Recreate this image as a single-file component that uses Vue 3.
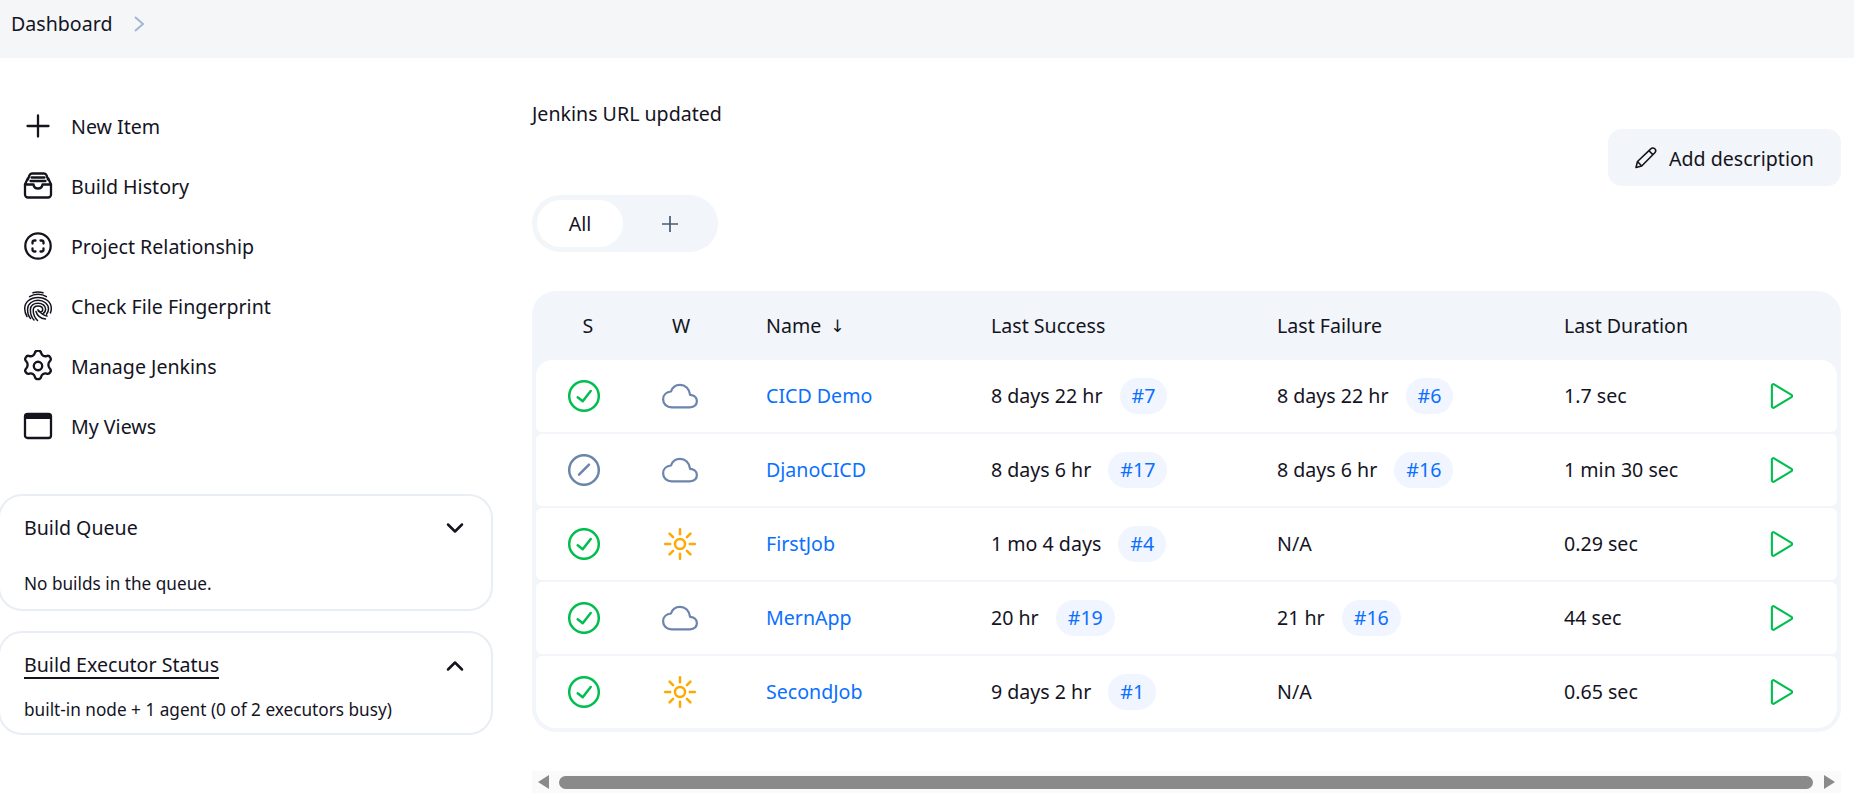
<script setup>
const links = [
  { label: 'New Item', icon: 'plus' },
  { label: 'Build History', icon: 'tray' },
  { label: 'Project Relationship', icon: 'scan' },
  { label: 'Check File Fingerprint', icon: 'finger' },
  { label: 'Manage Jenkins', icon: 'gear' },
  { label: 'My Views', icon: 'window' }
]
const rows = [
  { s: 'ok', w: 'cloud', name: 'CICD Demo', succ: '8 days 22 hr', sb: '#7', fail: '8 days 22 hr', fb: '#6', dur: '1.7 sec' },
  { s: 'off', w: 'cloud', name: 'DjanoCICD', succ: '8 days 6 hr', sb: '#17', fail: '8 days 6 hr', fb: '#16', dur: '1 min 30 sec' },
  { s: 'ok', w: 'sun', name: 'FirstJob', succ: '1 mo 4 days', sb: '#4', fail: 'N/A', fb: '', dur: '0.29 sec' },
  { s: 'ok', w: 'cloud', name: 'MernApp', succ: '20 hr', sb: '#19', fail: '21 hr', fb: '#16', dur: '44 sec' },
  { s: 'ok', w: 'sun', name: 'SecondJob', succ: '9 days 2 hr', sb: '#1', fail: 'N/A', fb: '', dur: '0.65 sec' }
]
const rays = [0, 45, 90, 135, 180, 225, 270, 315]
</script>

<template>
  <div class="page">
    <header class="topbar">
      <span>Dashboard</span>
      <svg class="crumb" viewBox="0 0 12 18" width="12" height="18"><path d="M2 2l8 7-8 7" /></svg>
    </header>
    <div class="body">
      <aside class="side">
        <nav class="links">
          <a v-for="l in links" :key="l.label" class="link">
            <svg class="ico" viewBox="0 0 32 32" width="32" height="32">
              <g v-if="l.icon === 'plus'" class="line"><path d="M16 5.500v21M5.500 16h21" /></g>
              <g v-else-if="l.icon === 'tray'" class="line">
                <path d="M6 9.500 7.400 5.400A3 3 0 0 1 10 3.500h12a3 3 0 0 1 2.600 1.900L26 9.500" />
                <path d="M3 14.500v10a3 3 0 0 0 3 3h20a3 3 0 0 0 3-3v-10l-2.700-6" />
                <path d="M5.700 8.500 3 14.500h8.500c.3 2.500 2 4 4.500 4s4.200-1.500 4.500-4H29" />
                <path d="M9.500 7.500h13M8.500 11h15" />
              </g>
              <g v-else-if="l.icon === 'scan'" class="line">
                <circle cx="16" cy="16" r="12.700" />
                <path d="M10.500 13.500v-1a2 2 0 0 1 2-2h1M18.500 10.500h1a2 2 0 0 1 2 2v1M21.500 18.500v1a2 2 0 0 1-2 2h-1M13.500 21.500h-1a2 2 0 0 1-2-2v-1" />
              </g>
              <g v-else-if="l.icon === 'finger'" class="fine">
                <path d="M11 2.800c3-1.100 7-1.100 10 0" />
                <path d="M7.600 6.600c5-3.300 12-3.300 16.800 0" />
                <path d="M5 26.500c-1.600-2.700-2.300-5.500-2.300-8C2.700 12 8.500 7.400 16 7.400s13.300 4.600 13.300 11c0 1.500-.3 3-.9 4.500" />
                <path d="M8.500 28.500c-1.800-2-3-5.500-2.900-9.500.2-5 4.700-8.700 10.400-8.700s10.500 3.600 10.500 8.700c0 2-.8 3.700-2 5.200" />
                <path d="M12 30c-2.500-2.500-3.700-6.500-3.600-10.500.1-3.800 3.300-6.300 7.600-6.300s7.600 2.400 7.600 5.900c0 2.500-1.300 4-2.800 4.800" />
                <path d="M15.500 30.500c-2.500-2.500-4.300-6-4.300-10 0-2.700 2-4.400 4.800-4.400 2.700 0 4.700 1.400 4.700 3.500 0 1.600-1.100 2.400-2.300 2.400s-2.300-.7-2.400-2.300" />
                <path d="M14 21.500c.9 3.300 3.900 6.800 9.500 7.500" />
                <path d="M17.500 21c1.400 2.500 3.700 4.300 7.500 5" />
              </g>
              <g v-else-if="l.icon === 'gear'" class="cog" transform="translate(16 16) scale(1.170) translate(-16 -16)">
                <circle cx="16" cy="16" r="3.600" />
                <path d="M13.300 4.900c.3-1.400 1.100-2.100 2.700-2.100s2.400.7 2.700 2.100c.4 2 2.700 3.300 4.600 2.600 1.400-.5 2.400-.2 3.200 1.200s.6 2.400-.5 3.300c-1.500 1.400-1.500 4.600 0 6 1.100.9 1.300 1.900.5 3.300s-1.800 1.700-3.200 1.200c-1.900-.7-4.200.6-4.600 2.600-.3 1.400-1.100 2.100-2.700 2.100s-2.400-.7-2.700-2.100c-.4-2-2.700-3.300-4.600-2.600-1.400.5-2.400.2-3.200-1.200s-.6-2.400.5-3.300c1.500-1.400 1.500-4.600 0-6-1.100-.9-1.300-1.900-.5-3.300s1.800-1.700 3.200-1.200c1.900.7 4.200-.6 4.600-2.600z" />
              </g>
              <g v-else class="line">
                <rect x="3" y="4" width="26" height="24" rx="2.500" />
                <path class="solid" d="M3 6.500A2.500 2.500 0 0 1 5.500 4h21A2.500 2.500 0 0 1 29 6.500V9H3z" />
              </g>
            </svg>
            <span>{{ l.label }}</span>
          </a>
        </nav>
        <section class="card queue">
          <div class="card-head">
            <span>Build Queue</span>
            <svg viewBox="0 0 18 12" width="18" height="12"><path d="M2 2.500l7 7 7-7" /></svg>
          </div>
          <p class="card-text">No builds in the queue.</p>
        </section>
        <section class="card exec">
          <div class="card-head">
            <span class="under">Build Executor Status</span>
            <svg viewBox="0 0 18 12" width="18" height="12"><path d="M2 9.500l7-7 7 7" /></svg>
          </div>
          <p class="card-text">built-in node + 1 agent (0 of 2 executors busy)</p>
        </section>
      </aside>

      <main class="main">
        <p class="notice">Jenkins URL updated</p>
        <div class="actions">
          <button class="btn">
            <svg viewBox="0 0 24 24" width="24" height="24"><path d="M3 21.500l1.500-6L17.800 2.800a2.800 2.800 0 0 1 4 0 2.800 2.800 0 0 1 0 3.900L8.700 20z" /><path d="M4.500 15.500l4.200 4.500M16 4.700l3.800 3.900" /></svg>
            <span>Add description</span>
          </button>
        </div>
        <div class="tabs">
          <span class="tab">All</span>
          <svg class="tab-plus" viewBox="0 0 18 18" width="18" height="18"><path d="M9 1v16M1 9h16" /></svg>
        </div>

        <div class="table">
          <div class="grid head">
            <span class="c">S</span>
            <span class="c wh">W</span>
            <span class="namecell">Name<span class="arrow">↓</span></span>
            <span>Last Success</span>
            <span>Last Failure</span>
            <span>Last Duration</span>
          </div>
          <div v-for="r in rows" :key="r.name" class="grid row">
            <span class="c sc">
              <svg viewBox="0 0 32 32" width="32" height="32" :class="r.s === 'ok' ? 'green' : 'grey'">
                <circle cx="16" cy="16" r="14.800" />
                <path v-if="r.s === 'ok'" d="M9.700 17.300l5 4 8-10.300" />
                <path v-else d="M11 20.700l10-10" />
              </svg>
            </span>
            <span class="c wc">
              <svg v-if="r.w === 'cloud'" class="cloud" viewBox="0 0 512 512" width="36" height="36">
                <path d="M400 240c-8.890-89.540-71-144-144-144-69 0-113.440 48.200-128 96-60 6-112 43.590-112 112 0 66 54 112 120 112h260c55 0 100-27.440 100-88 0-59.820-53-85.760-96-88z" />
              </svg>
              <svg v-else class="sun" viewBox="0 0 32 32" width="32" height="32">
                <circle cx="16" cy="16" r="5" />
                <path v-for="a in rays" :key="a" d="M16 1.200v5" :transform="`rotate(${a} 16 16)`" />
              </svg>
            </span>
            <a class="namecell jobname">{{ r.name }}</a>
            <span class="cell"><span>{{ r.succ }}</span><a class="badge">{{ r.sb }}</a></span>
            <span class="cell"><span>{{ r.fail }}</span><a v-if="r.fb" class="badge">{{ r.fb }}</a></span>
            <span>{{ r.dur }}</span>
            <span class="play">
              <svg viewBox="0 0 512 512" width="36" height="36">
                <path d="M112 111v290c0 17.440 17 28.520 31 20.160l247.900-148.370c12.120-7.250 12.120-26.330 0-33.580L143 90.840c-14-8.360-31 2.720-31 20.160z" />
              </svg>
            </span>
          </div>
        </div>

        <div class="scroll">
          <i class="tri left"></i>
          <div class="thumb"></div>
          <i class="tri right"></i>
        </div>
      </main>
    </div>
  </div>
</template>

<style>
html, body { margin: 0; background: #fff; overflow: hidden; }
</style>

<style scoped>
.page {
  width: 1854px;
  height: 812px;
  overflow: hidden;
  font-family: "Noto Sans", "Open Sans", sans-serif;
  font-size: 19.600px;
  line-height: 28px;
  color: #14141f;
}
.topbar {
  height: 58px;
  box-sizing: border-box;
  background: #f5f6f8;
  display: flex;
  align-items: center;
  padding: 0 0 10px 11px;
}
.crumb { margin-left: 21px; }
.crumb path { fill: none; stroke: #a4b6d4; stroke-width: 2; }
.body { display: flex; }
.side { width: 532px; flex: none; padding-top: 38px; }
.links { display: flex; flex-direction: column; margin-bottom: 38px; }
.link { height: 60px; display: flex; align-items: center; gap: 17px; padding-left: 22px; }
.link span { padding-top: 2px; }
.ico { flex: none; }
.line { fill: none; stroke: #14141f; stroke-width: 2.300; stroke-linecap: round; stroke-linejoin: round; }
.line .solid { fill: #14141f; stroke: none; }
.fine { fill: none; stroke: #14141f; stroke-width: 1.500; stroke-linecap: round; }
.cog { fill: none; stroke: #14141f; stroke-width: 2; stroke-linejoin: round; }
.card {
  width: 495px;
  box-sizing: border-box;
  margin-left: -2px;
  border: 2px solid #e9edf4;
  border-radius: 24px;
  padding: 0 24px;
}
.queue { height: 117px; padding-top: 18px; margin-bottom: 20px; }
.exec { height: 104px; padding-top: 19px; }
.card-head { display: flex; justify-content: space-between; align-items: center; height: 28px; padding-right: 3px; }
.card-head svg path { fill: none; stroke: #14141f; stroke-width: 2.500; stroke-linecap: round; stroke-linejoin: round; }
.under { border-bottom: 2px solid #14141f; line-height: 24px; }
.card-text { margin: 0; font-size: 17.200px; line-height: 24px; }
.queue .card-text { margin-top: 30px; }
.exec .card-text { margin-top: 18px; }

.main { width: 1309px; flex: none; padding-top: 42px; }
.notice { margin: 0; height: 28px; }
.actions { display: flex; justify-content: flex-end; margin-top: 1px; }
.btn {
  width: 233px;
  height: 57px;
  box-sizing: border-box;
  border: 0;
  border-radius: 14px;
  background: #f2f5f9;
  color: #14141f;
  font: inherit;
  display: flex;
  align-items: center;
  gap: 12px;
  padding: 0 0 0 25px;
}
.btn span { padding-top: 2px; }
.btn svg path { fill: none; stroke: #14141f; stroke-width: 1.600; stroke-linejoin: round; }
.tabs {
  width: 186px;
  height: 57px;
  box-sizing: border-box;
  margin-top: 9px;
  background: #f2f5f9;
  border-radius: 29px;
  padding: 5px;
  display: flex;
  align-items: center;
}
.tab {
  width: 86px;
  height: 47px;
  background: #fff;
  border-radius: 24px;
  display: flex;
  align-items: center;
  justify-content: center;
}
.tab-plus { margin-left: 38px; }
.tab-plus path { fill: none; stroke: #4a5a78; stroke-width: 1.700; }
.table {
  margin-top: 39px;
  background: #f2f5f9;
  border-radius: 24px;
  padding: 0 4px 4px;
  display: flex;
  flex-direction: column;
  gap: 2px;
}
.grid {
  display: grid;
  grid-template-columns: 96px 98px 261px 286px 287px 200px 1fr;
  align-items: center;
}
.head { height: 67px; padding-top: 2px; box-sizing: border-box; }
.row { height: 72px; background: #fff; border-radius: 6px; }
.row:nth-child(2) { border-radius: 16px 16px 6px 6px; }
.row:last-child { border-radius: 6px 6px 20px 20px; }
.c { display: flex; justify-content: center; }
.head .c:first-child { padding-left: 8px; }
.wc { padding-right: 2px; }
.namecell { padding-left: 36px; display: flex; align-items: center; }
.arrow { margin-left: 9px; font-size: 17px; font-family: "DejaVu Sans", sans-serif; }
.jobname { color: #0b6fff; }
.cell { display: flex; align-items: center; gap: 17px; }
.badge {
  height: 36px;
  padding: 0 12px;
  border-radius: 18px;
  background: #f0f5ff;
  color: #0b6fff;
  display: flex;
  align-items: center;
}
.green circle, .green path { fill: none; stroke: #00bf4f; stroke-width: 2.500; stroke-linecap: round; stroke-linejoin: round; }
.grey circle, .grey path { fill: none; stroke: #6c85ac; stroke-width: 2.500; stroke-linecap: round; }
.cloud path { fill: none; stroke: #6c85ac; stroke-width: 32; stroke-linejoin: round; }
.sun circle, .sun path { fill: none; stroke: #ffa800; stroke-width: 2.500; stroke-linecap: round; }
.play { display: flex; justify-content: flex-start; }
.play path { fill: none; stroke: #00bf4f; stroke-width: 30; stroke-linejoin: round; }
.scroll {
  margin-top: 39px;
  height: 22px;
  background: #fafafa;
  display: flex;
  align-items: center;
  padding: 0 6px;
  box-sizing: border-box;
}
.thumb { flex: 1; height: 13px; background: #8a8a8a; border-radius: 7px; margin: 0 11px 0 10px; }
.tri { width: 0; height: 0; border-top: 7px solid transparent; border-bottom: 7px solid transparent; }
.tri.left { border-right: 11px solid #8a8a8a; }
.tri.right { border-left: 11px solid #8a8a8a; }
</style>
